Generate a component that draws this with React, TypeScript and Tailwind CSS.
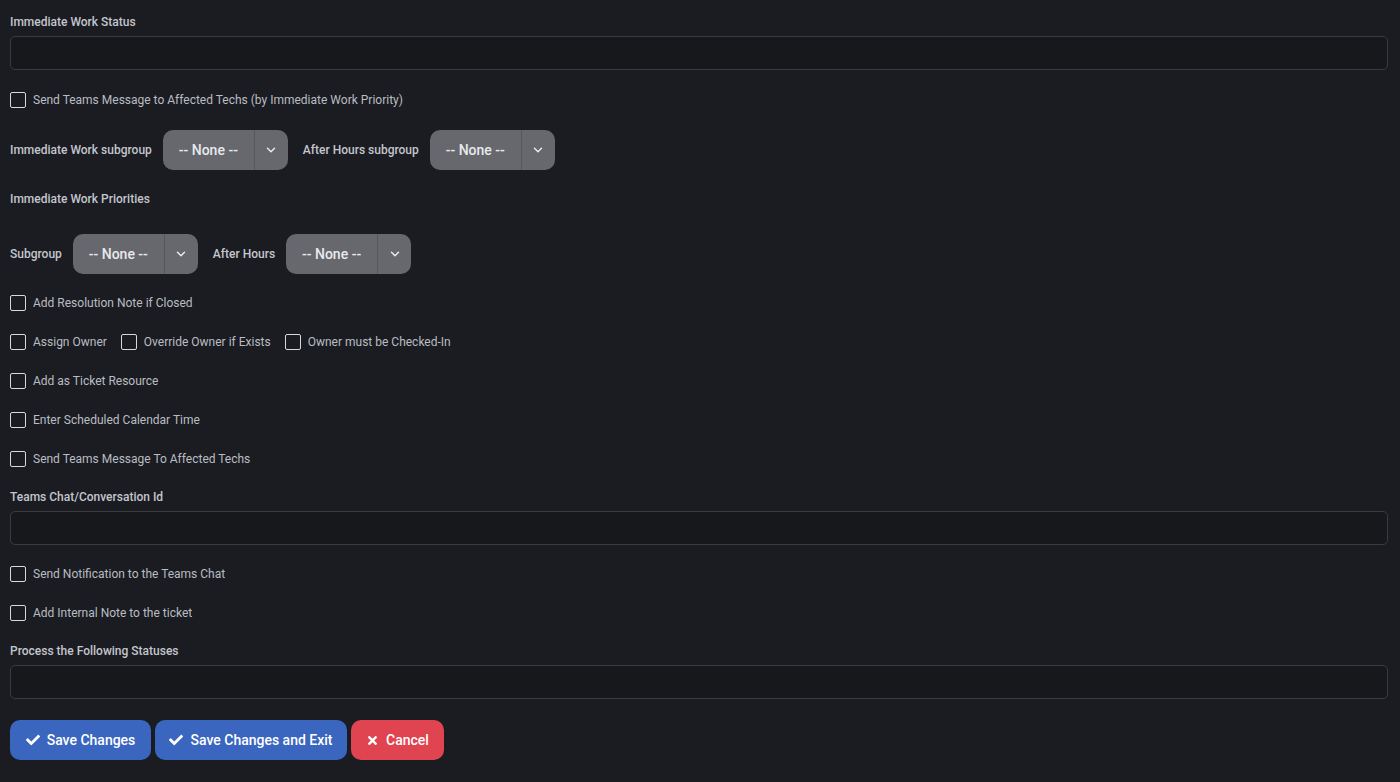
import React from "react"
import { ChevronDown } from "lucide-react"
import { FaCheck, FaTimes } from "react-icons/fa"

function Label({ text }: { text: string }) {
  return <div className="h-4 text-[12px] leading-4 font-medium text-[#c3c6cd]">{text}</div>
}

function TextBox() {
  return <div className="mt-[6px] h-[34px] w-full rounded-[5px] border border-[#3a3b41] bg-[#17181c]" />
}

function Check({ text }: { text: string }) {
  return (
    <label className="flex h-4 items-center gap-[7px]">
      <span className="h-4 w-4 rounded-[2px] border border-[#d6d8dc] bg-transparent" />
      <span className="text-[12px] leading-4 text-[#b9bcc3]">{text}</span>
    </label>
  )
}

function Select() {
  return (
    <div className="flex h-10 w-[125px] overflow-hidden rounded-[10px] bg-[#66686e] text-[#e8e9ec]">
      <div className="flex flex-1 items-center justify-center text-[14px] font-medium">-- None --</div>
      <div className="w-px bg-[#55575c]" />
      <div className="flex w-[33px] items-center justify-center">
        <ChevronDown size={14} strokeWidth={2.5} />
      </div>
    </div>
  )
}

function SelectRow({ items }: { items: string[] }) {
  return (
    <div className="flex items-center">
      {items.map((t, i) => (
        <div key={t} className={"flex items-center " + (i > 0 ? "ml-[15px]" : "")}>
          <span className="mr-[11px] text-[12px] font-medium text-[#c3c6cd]">{t}</span>
          <Select />
        </div>
      ))}
    </div>
  )
}

export default function App() {
  return (
    <div
      className="min-h-[782px] w-full bg-[#1b1c21] pl-[10px] pr-[12px] pt-[14px] pb-[22px]"
      style={{ fontFamily: "Roboto, 'Liberation Sans', sans-serif" }}
    >
      <Label text="Immediate Work Status" />
      <TextBox />

      <div className="mt-[22px]">
        <Check text="Send Teams Message to Affected Techs (by Immediate Work Priority)" />
      </div>

      <div className="mt-[22px]">
        <SelectRow items={["Immediate Work subgroup", "After Hours subgroup"]} />
      </div>

      <div className="mt-[21px]">
        <Label text="Immediate Work Priorities" />
      </div>

      <div className="mt-[27px]">
        <SelectRow items={["Subgroup", "After Hours"]} />
      </div>

      <div className="mt-[21px]">
        <Check text="Add Resolution Note if Closed" />
      </div>

      <div className="mt-[23px] flex gap-[14px]">
        <Check text="Assign Owner" />
        <Check text="Override Owner if Exists" />
        <Check text="Owner must be Checked-In" />
      </div>

      <div className="mt-[23px]">
        <Check text="Add as Ticket Resource" />
      </div>
      <div className="mt-[23px]">
        <Check text="Enter Scheduled Calendar Time" />
      </div>
      <div className="mt-[23px]">
        <Check text="Send Teams Message To Affected Techs" />
      </div>

      <div className="mt-[22px]">
        <Label text="Teams Chat/Conversation Id" />
      </div>
      <TextBox />

      <div className="mt-[21px]">
        <Check text="Send Notification to the Teams Chat" />
      </div>
      <div className="mt-[23px]">
        <Check text="Add Internal Note to the ticket" />
      </div>

      <div className="mt-[22px]">
        <Label text="Process the Following Statuses" />
      </div>
      <TextBox />

      <div className="mt-[21px] flex gap-1">
        <button className="flex h-10 w-[141px] items-center justify-center gap-[7px] rounded-[10px] bg-[#3b66bf] text-[14px] font-medium text-white">
          <FaCheck size={14} />
          Save Changes
        </button>
        <button className="flex h-10 w-[192px] items-center justify-center gap-[7px] rounded-[10px] bg-[#3b66bf] text-[14px] font-medium text-white">
          <FaCheck size={14} />
          Save Changes and Exit
        </button>
        <button className="flex h-10 w-[93px] items-center justify-center gap-[7px] rounded-[10px] bg-[#df4450] text-[14px] font-medium text-white">
          <FaTimes size={13} />
          Cancel
        </button>
      </div>
    </div>
  )
}
